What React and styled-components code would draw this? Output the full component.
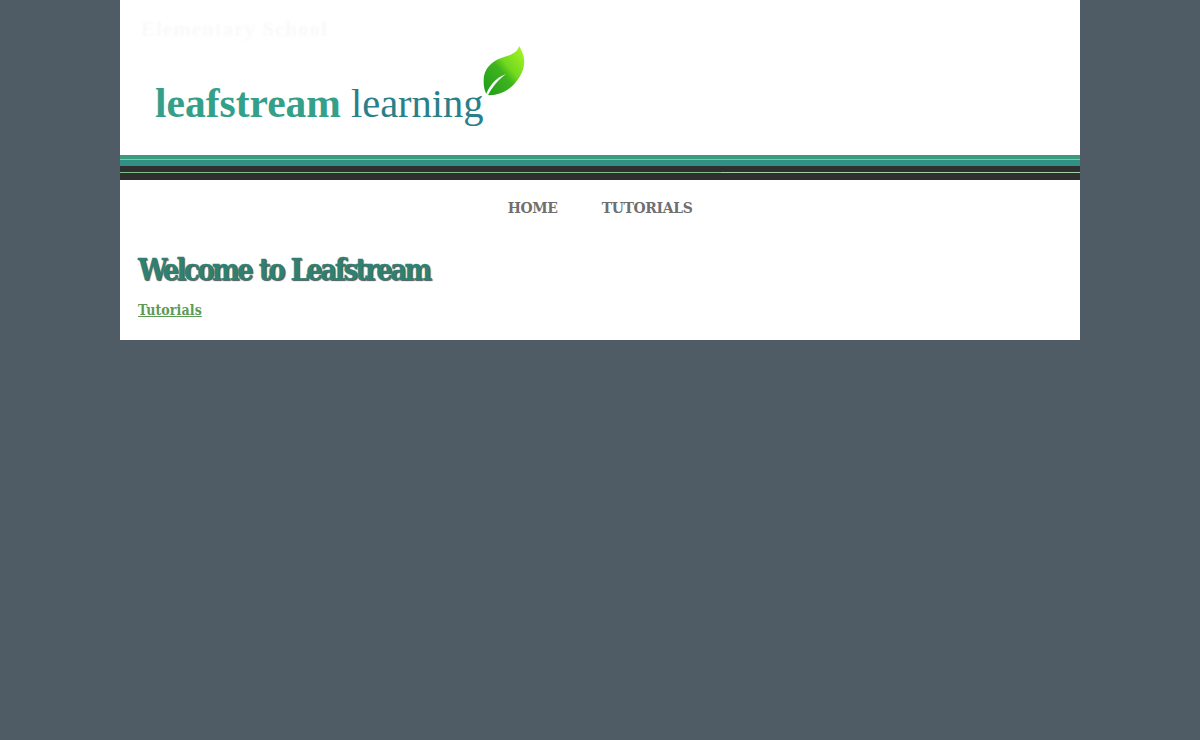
import React from "react";
import styled, { createGlobalStyle } from "styled-components";

const Global = createGlobalStyle`
  html, body { margin: 0; padding: 0; background: #4f5b65; }
  #root { width: 100%; }
`;
const Page = styled.div`
  width: 960px;
  margin: 0 auto;
  background: #fff;
  height: 340px;
  display: flex;
  flex-direction: column;
`;
const Header = styled.header`
  height: 155px;
  box-sizing: border-box;
  padding: 45px 0 0 35px;
  display: flex;
  flex-direction: column;
  position: relative;
`;
const Ghost = styled.div`
  position: absolute;
  left: 21px;
  top: 17px;
  font: 700 21px "Liberation Serif", serif;
  letter-spacing: 1px;
  color: #f9f9f9;
  filter: blur(1px);
`;
const LogoRow = styled.div`
  display: flex;
  align-items: flex-start;
`;
const LogoText = styled.div`
  margin-top: 35px;
  font-family: "Liberation Serif", serif;
  line-height: 46px;
  white-space: nowrap;
`;
const LogoBold = styled.span`
  font-weight: 700;
  font-size: 41.5px;
  color: #35a08a;
`;
const LogoLight = styled.span`
  font-size: 40.5px;
  color: #2a8088;
  margin-left: 10px;
`;
const Leaf = styled.svg`
  width: 44px;
  height: 54px;
  flex: none;
  margin-left: -2px;
`;
const Band = styled.div`
  height: ${p => p.$h}px;
  background: ${p => p.$c};
`;
const SplitLine = styled.div`
  display: flex;
  height: 1px;
`;
const Segment = styled.div`
  width: ${p => p.$w}px;
  background: ${p => p.$c};
`;
const Nav = styled.nav`
  height: 55px;
  display: flex;
  justify-content: center;
  align-items: center;
  gap: 44px;
`;
const NavLink = styled.a`
  font-family: "DejaVu Serif Condensed", "DejaVu Serif", serif;
  font-stretch: condensed;
  font-weight: 700;
  font-size: 15.5px;
  letter-spacing: -0.35px;
  color: #6f6f6f;
  text-decoration: none;
`;
const Content = styled.main`
  padding: 17px 18px 0;
`;
const Title = styled.h1`
  margin: 0;
  font-family: "DejaVu Serif Condensed", "DejaVu Serif", serif;
  font-stretch: condensed;
  font-weight: 700;
  font-size: 29px;
  line-height: 36px;
  letter-spacing: -2.55px;
  word-spacing: 1px;
  color: #2f7f72;
  -webkit-text-stroke: 0.4px #2f7f72;
  text-shadow: 1px 1px 1px #555;
  white-space: nowrap;
`;
const SubLink = styled.a`
  display: inline-block;
  margin-top: 13px;
  font-family: "DejaVu Serif Condensed", "DejaVu Serif", serif;
  font-stretch: condensed;
  font-weight: 700;
  font-size: 14px;
  line-height: 18px;
  letter-spacing: 0.1px;
  color: #5c9a56;
  text-decoration: underline;
`;

export default function App() {
  return (
    <>
      <Global />
      <Page>
        <Header>
          <Ghost>Elementary School</Ghost>
          <LogoRow>
            <LogoText>
              <LogoBold>leafstream</LogoBold>
              <LogoLight>learning</LogoLight>
            </LogoText>
            <Leaf viewBox="0 0 44 54">
              <defs>
                <linearGradient id="leafg" x1="0.1" y1="0.9" x2="0.9" y2="0.1">
                  <stop offset="0" stopColor="#25a01c" />
                  <stop offset="0.45" stopColor="#3fb41d" />
                  <stop offset="0.62" stopColor="#72d81f" />
                  <stop offset="1" stopColor="#9cf024" />
                </linearGradient>
              </defs>
              <path
                d="M37 1 C36 7 29 10 22 12 C12 15 4 21 2 31 C1 39 2 45 5 50 C16 51 27 46 34 37 C40 29 43 22 42 14 C41.5 9 39.5 5 37 1 Z"
                fill="url(#leafg)"
              />
              <path d="M3 52 C7 41 13 33 24 29 C16 35 10 42 5 52 Z" fill="#fff" />
            </Leaf>
          </LogoRow>
        </Header>
        <Band $h={4} $c="#3a9a7e" />
        <Band $h={1} $c="#6fd0a0" />
        <Band $h={6} $c="#2f9083" />
        <Band $h={6} $c="#2f2f2f" />
        <SplitLine>
          <Segment $w={601} $c="#7cc084" />
          <Segment $w={359} $c="#a5cfa8" />
        </SplitLine>
        <Band $h={7} $c="#2f2f2f" />
        <Nav>
          <NavLink href="#">HOME</NavLink>
          <NavLink href="#">TUTORIALS</NavLink>
        </Nav>
        <Content>
          <Title>Welcome to Leafstream</Title>
          <SubLink href="#">Tutorials</SubLink>
        </Content>
      </Page>
    </>
  );
}
